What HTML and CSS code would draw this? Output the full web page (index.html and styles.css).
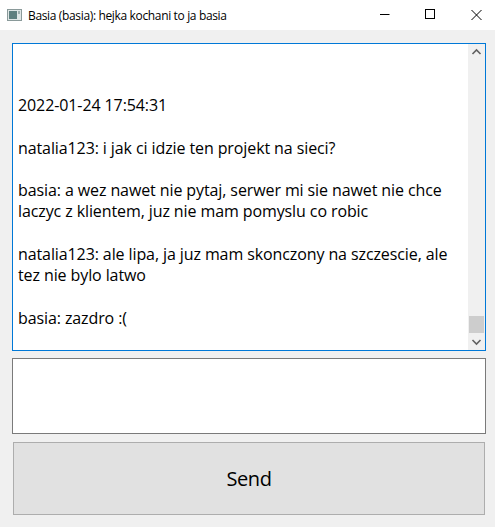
FILE: index.html
```html
<!DOCTYPE html>
<html>
<head>
<meta charset="utf-8">
<link rel="stylesheet" href="styles.css">
</head>
<body>
<div class="window">
  <div class="titlebar">
    <svg class="app-icon" width="16" height="14" viewBox="0 0 16 14">
      <rect x="0.5" y="1.5" width="14" height="11" fill="#dfe6e6" stroke="#8a9a9a"/>
      <rect x="2" y="3" width="8" height="8" fill="#5f8080"/>
      <rect x="11" y="3" width="2" height="3" fill="#9fb0b0"/>
    </svg>
    <span class="title">Basia (basia): hejka kochani to ja basia</span>
    <div class="controls">
      <svg class="ctl" width="46" height="30" viewBox="0 0 46 30"><path d="M23 14.5h9.5" stroke="#000" stroke-width="1"/></svg>
      <svg class="ctl" width="46" height="30" viewBox="0 0 46 30"><rect x="22.5" y="9.5" width="9" height="9" fill="none" stroke="#000" stroke-width="1"/></svg>
      <svg class="ctl" width="46" height="30" viewBox="0 0 46 30"><path d="M22.5 10l10 10M32.5 10l-10 10" stroke="#000" stroke-width="1"/></svg>
    </div>
  </div>
  <div class="content">
    <div class="chat">
      <div class="messages">
        <p>2022-01-24 17:54:31</p>
        <p>natalia123: i jak ci idzie ten projekt na sieci?</p>
        <p>basia: a wez nawet nie pytaj, serwer mi sie nawet nie chce<br>laczyc z klientem, juz nie mam pomyslu co robic</p>
        <p>natalia123: ale lipa, ja juz mam skonczony na szczescie, ale<br>tez nie bylo latwo</p>
        <p>basia: zazdro :(</p>
      </div>
      <div class="scrollbar">
        <svg class="arrow" width="17" height="17" viewBox="0 0 17 17"><path d="M4.5 10l4-4 4 4" fill="none" stroke="#606060" stroke-width="1.6"/></svg>
        <div class="track"><div class="thumb"></div></div>
        <svg class="arrow" width="17" height="17" viewBox="0 0 17 17"><path d="M4.5 7l4 4 4-4" fill="none" stroke="#606060" stroke-width="1.6"/></svg>
      </div>
    </div>
    <div class="input"></div>
    <button class="send">Send</button>
  </div>
</div>
</body>
</html>
```

FILE: styles.css
```css
html, body {
  margin: 0;
  padding: 0;
  background: #f0f0f0;
}
.window {
  width: 495px;
  height: 527px;
  display: flex;
  flex-direction: column;
  font-family: "Open Sans", "Noto Sans", sans-serif;
}
.titlebar {
  height: 30px;
  background: #ffffff;
  display: flex;
  align-items: center;
}
.app-icon {
  margin-left: 7px;
  margin-right: 5px;
}
.title {
  font-size: 12px;
  color: #000;
  flex: 1;
  letter-spacing: -0.35px;
}
.controls {
  display: flex;
  align-self: stretch;
}
.ctl {
  display: block;
}
.content {
  flex: 1;
  padding: 13px 9px 12px 12px;
  display: flex;
  flex-direction: column;
}
.chat {
  height: 308px;
  box-sizing: border-box;
  border: 1px solid #0078d7;
  background: #fff;
  display: flex;
}
.messages {
  flex: 1;
  padding: 51px 0 0 5px;
  font-size: 16px;
  line-height: 21.3px;
  color: #000;
  white-space: nowrap;
  overflow: hidden;
  letter-spacing: -0.1px;
}
.messages p {
  margin: 0 0 21.3px 0;
}
.scrollbar {
  width: 17px;
  background: #f0f0f0;
  display: flex;
  flex-direction: column;
}
.arrow {
  display: block;
}
.track {
  flex: 1;
  display: flex;
  flex-direction: column;
  justify-content: flex-end;
}
.thumb {
  height: 17px;
  margin: 0 1px;
  background: #cdcdcd;
}
.input {
  margin-top: 7px;
  height: 76px;
  box-sizing: border-box;
  border: 1px solid #7a7a7a;
  background: #fff;
}
.send {
  margin: 8px 1px 0 1px;
  height: 73px;
  box-sizing: border-box;
  border: 1px solid #adadad;
  background: #e1e1e1;
  font-family: "Open Sans", "Noto Sans", sans-serif;
  font-size: 20px;
  letter-spacing: -0.4px;
  color: #000;
  padding: 0;
}
```
